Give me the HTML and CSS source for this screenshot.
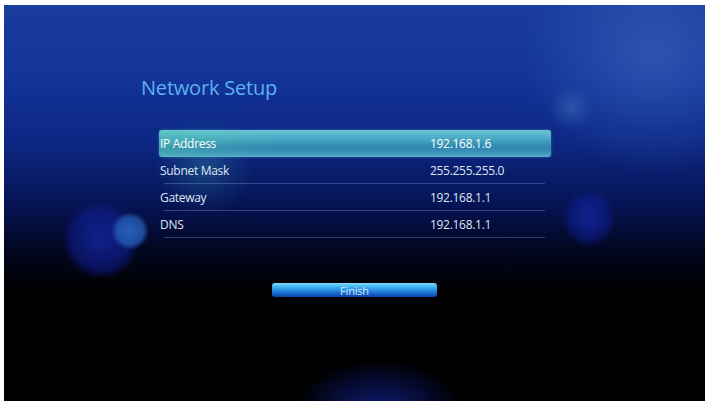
FILE: index.html
```html
<!DOCTYPE html>
<html>
<head>
<meta charset="utf-8">
<link rel="stylesheet" href="styles.css">
</head>
<body>
<div class="screen">
  <div class="bokeh b1"></div>
  <div class="bokeh b2"></div>
  <div class="bokeh b3"></div>
  <div class="bokeh b4"></div>
  <div class="bokeh b5"></div>
  <div class="bokeh b6"></div>
  <div class="bokeh b7"></div>
  <div class="content">
    <h1 class="title">Network Setup</h1>
    <div class="table">
      <div class="row selected"><span class="label">IP Address</span><span class="value">192.168.1.6</span></div>
      <div class="row"><span class="label">Subnet Mask</span><span class="value">255.255.255.0</span></div>
      <div class="row"><span class="label">Gateway</span><span class="value">192.168.1.1</span></div>
      <div class="row"><span class="label">DNS</span><span class="value">192.168.1.1</span></div>
    </div>
    <div class="actions">
      <div class="button">Finish</div>
    </div>
  </div>
</div>
</body>
</html>
```

FILE: styles.css
```css
html, body {
  margin: 0;
  padding: 0;
  background: #ffffff;
}
body {
  width: 709px;
  height: 401px;
  overflow: hidden;
  font-family: "Open Sans", "Noto Sans", sans-serif;
}
.screen {
  position: relative;
  margin: 5px 4px 0 4px;
  height: 396px;
  overflow: hidden;
  background:
    linear-gradient(180deg, #1a3c9c 0%, #14349a 18%, #0c2682 35%, #061456 50%, #020620 62%, #000000 72%, #000000 100%);
}
.bokeh {
  position: absolute;
  border-radius: 50%;
}
.b1 { /* top right glow */
  left: 520px; top: -70px; width: 260px; height: 240px;
  background: radial-gradient(closest-side, rgba(70,120,200,0.45), rgba(60,110,200,0.2) 60%, rgba(40,80,180,0) 100%);
}
.b2 { /* big dark left circle */
  left: 58px; top: 196px; width: 78px; height: 78px;
  background: radial-gradient(closest-side, rgba(20,40,170,0.75), rgba(15,30,150,0.55) 75%, rgba(10,20,120,0) 100%);
}
.b3 { /* small lighter left circle */
  left: 107px; top: 207px; width: 38px; height: 38px;
  background: radial-gradient(closest-side, rgba(40,100,190,0.95), rgba(35,90,180,0.8) 70%, rgba(30,70,170,0) 100%);
}
.b4 { /* right circle */
  left: 558px; top: 184px; width: 54px; height: 58px;
  background: radial-gradient(closest-side, rgba(20,40,170,0.75), rgba(15,30,150,0.5) 70%, rgba(10,20,120,0) 100%);
}
.b5 { /* bottom center glow */
  left: 290px; top: 355px; width: 170px; height: 100px;
  background: radial-gradient(closest-side, rgba(20,40,160,0.7), rgba(15,30,140,0.35) 60%, rgba(10,20,100,0) 100%);
}
.b6 { /* teal glow behind list */
  left: 150px; top: 110px; width: 100px; height: 100px;
  background: radial-gradient(closest-side, rgba(50,150,170,0.35), rgba(40,120,160,0.15) 60%, rgba(30,90,150,0) 100%);
}
.b7 { /* faint right small */
  left: 545px; top: 80px; width: 45px; height: 45px;
  background: radial-gradient(closest-side, rgba(80,140,200,0.35), rgba(70,120,190,0) 100%);
}
.content {
  position: relative;
  padding: 71px 0 0 137px;
}
.title {
  margin: 0;
  font-size: 20px;
  line-height: 24px;
  font-weight: 400;
  color: #5cb2ef;
  letter-spacing: -0.2px;
}
.table {
  margin: 30px 0 0 18px;
  width: 392px;
}
.row {
  display: flex;
  align-items: center;
  height: 27px;
  font-size: 12px;
  color: #dfe6f2;
  letter-spacing: -0.3px;
  position: relative;
}
.row + .row::after {
  content: "";
  position: absolute;
  left: 5px;
  right: 6px;
  bottom: 0;
  height: 1px;
  background: rgba(110,130,190,0.45);
}
.row .label {
  width: 270px;
  padding-left: 1px;
}
.row.selected {
  border-radius: 3px;
  color: #ffffff;
  background:
    linear-gradient(90deg, rgba(80,200,170,0.35) 0%, rgba(80,200,170,0) 30%),
    linear-gradient(180deg, #6cc6d8 0%, #47a6c2 35%, #2f86ae 65%, #3d93bb 85%, #5aaccc 100%);
  box-shadow: 0 0 3px rgba(90,180,220,0.5);
}
.actions {
  margin: 45px 0 0 131px;
}
.button {
  width: 165px;
  height: 14px;
  border-radius: 3px;
  background: linear-gradient(180deg, #7fdcfa 0%, #3cb0ee 30%, #1a6fd4 70%, #0c3fa8 100%);
  color: #d2e8fb;
  font-size: 11px;
  line-height: 16px;
  text-align: center;
  letter-spacing: -0.2px;
}
```
